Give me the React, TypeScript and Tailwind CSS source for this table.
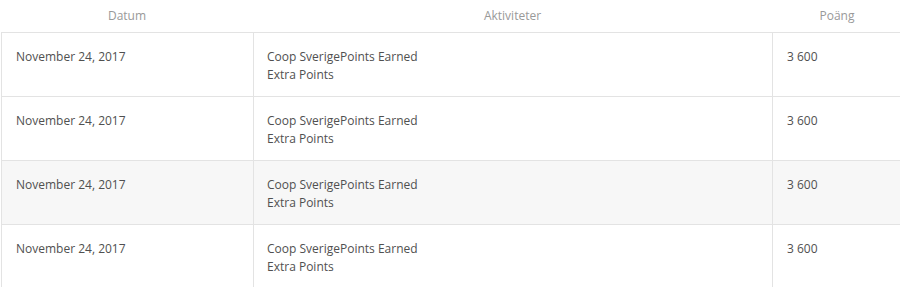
const rows = [
  { date: "November 24, 2017", title: "Coop SverigePoints Earned", sub: "Extra Points", points: "3 600", shaded: false },
  { date: "November 24, 2017", title: "Coop SverigePoints Earned", sub: "Extra Points", points: "3 600", shaded: false },
  { date: "November 24, 2017", title: "Coop SverigePoints Earned", sub: "Extra Points", points: "3 600", shaded: true },
  { date: "November 24, 2017", title: "Coop SverigePoints Earned", sub: "Extra Points", points: "3 600", shaded: false },
];

export default function App() {
  return (
    <div className="w-[900px] h-[287px] overflow-hidden bg-white font-['Open_Sans',sans-serif]">
      <div className="w-[902px] pl-px">
        <div className="grid grid-cols-[252px_519px_1fr] h-[32px] items-center text-[12px] text-[#999]">
          <div className="text-center">Datum</div>
          <div className="text-center">Aktiviteter</div>
          <div className="text-center">Poäng</div>
        </div>
        <div className="border-t border-l border-[#e3e3e3]">
          {rows.map((r, i) => (
            <div
              key={i}
              className={`grid grid-cols-[252px_519px_1fr] h-[64px] border-b border-[#e3e3e3] text-[12px] leading-[18px] text-[#505050] ${r.shaded ? "bg-[#f7f7f7]" : "bg-white"}`}
            >
              <div className="pl-[14px] pr-[14px] pt-[15px] border-r border-[#e3e3e3]">{r.date}</div>
              <div className="pl-[13px] pr-[14px] pt-[15px] border-r border-[#e3e3e3]">
                <div>{r.title}</div>
                <div>{r.sub}</div>
              </div>
              <div className="pl-[14px] pr-[14px] pt-[15px] border-r border-[#e3e3e3]">{r.points}</div>
            </div>
          ))}
        </div>
      </div>
    </div>
  );
}
